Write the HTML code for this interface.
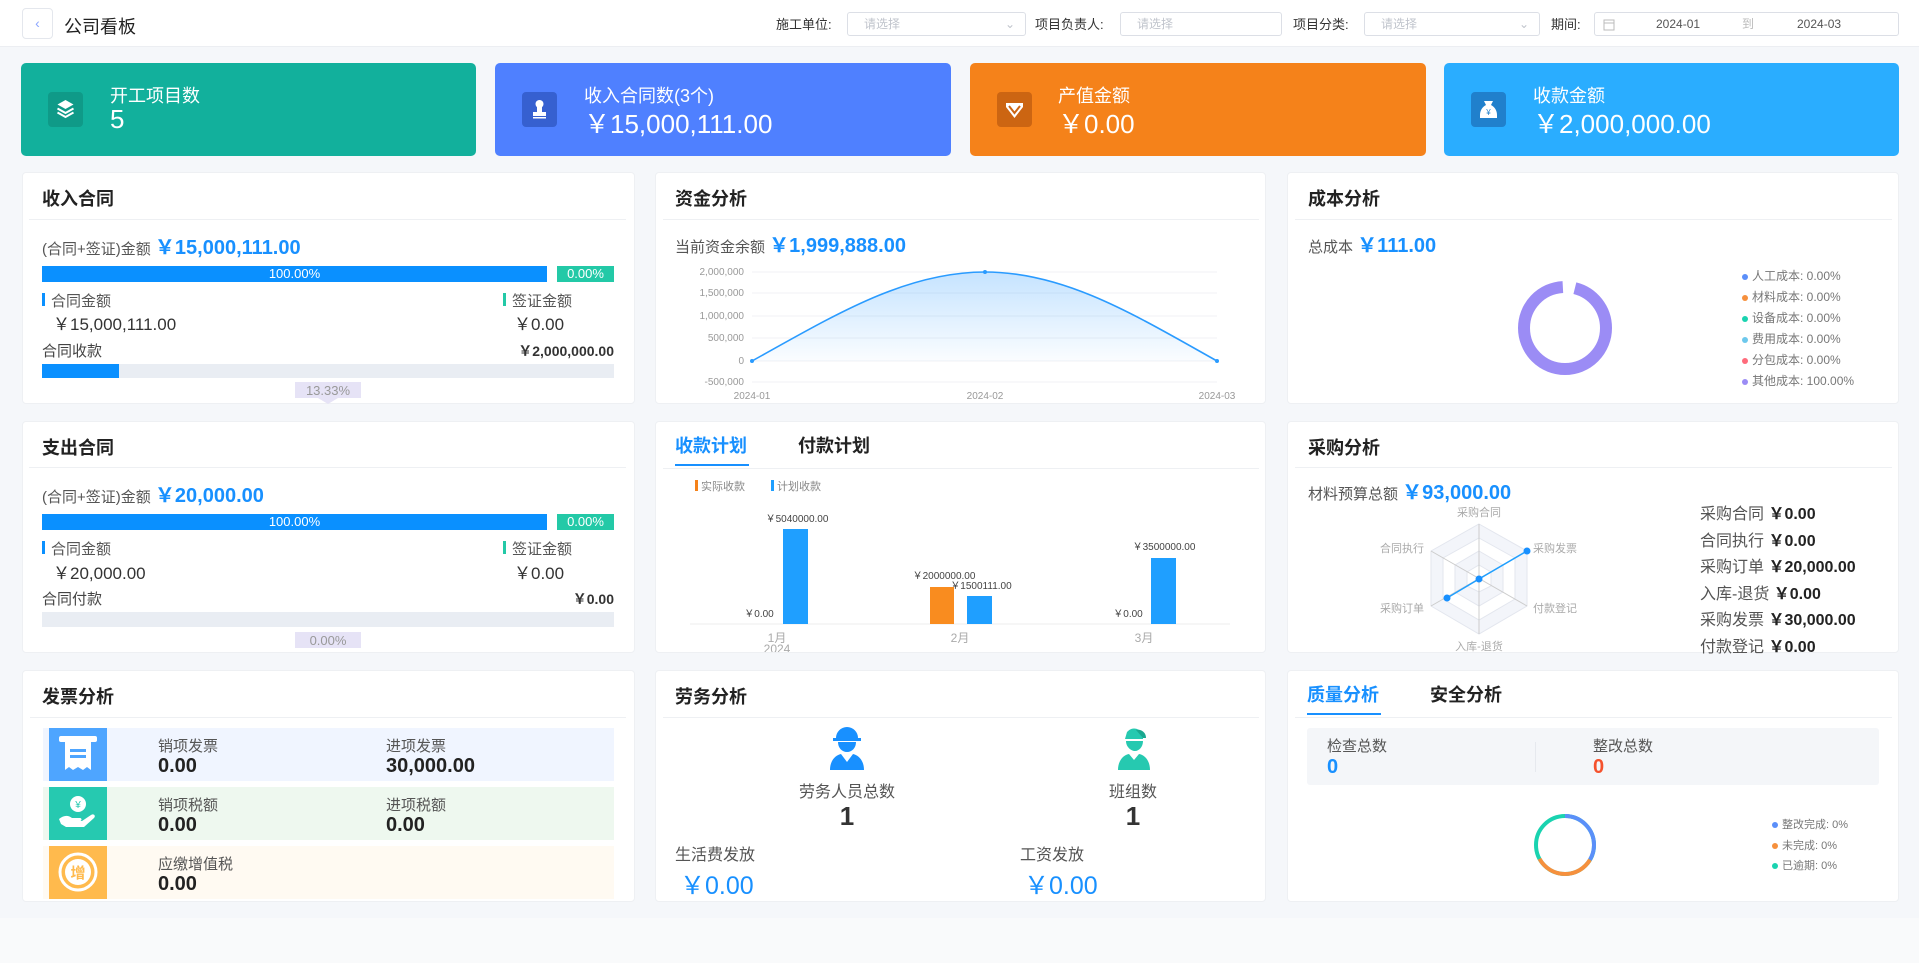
<!DOCTYPE html>
<html><head><meta charset="utf-8">
<style>
*{margin:0;padding:0;box-sizing:border-box}
body{width:1919px;height:963px;overflow:hidden;background:#f5f7fa;font-family:"Liberation Sans","Noto Sans CJK SC",sans-serif;color:#333;position:relative}
.a{position:absolute;white-space:nowrap}
.hdr{left:0;top:0;width:1919px;height:47px;background:#fff;border-bottom:1px solid #eceef2}
.inp{height:24px;top:12px;border:1px solid #dcdfe6;border-radius:3px;background:#fff;font-size:12px;color:#c0c4cc;padding-left:16px;line-height:22px}
.fl{top:14px;font-size:13px;color:#333}
.kpi{top:63px;height:93px;border-radius:5px;color:#fff}
.kpi .ic{position:absolute;left:27px;top:29px;width:35px;height:35px;border-radius:4px}
.kpi .t{position:absolute;top:19px;font-size:18px}
.kpi .v{position:absolute;top:41px;font-size:26px}
.p{background:#fff;border-radius:4px;border:1px solid #eef0f3}
.tt{font-size:18px;font-weight:bold;color:#222}
.dv{height:1px;background:#eef0f3}
.lb{font-size:15px;color:#555}
.bv{font-size:20px;font-weight:bold;color:#1890ff}
.sm{font-size:11px;color:#888}
.leg{font-size:12px;color:#777}
.dot{display:inline-block;width:6px;height:6px;border-radius:3px;margin-right:4px;vertical-align:middle}
</style></head><body>
<div class="a" style="left:0;top:918px;width:1919px;height:45px;background:#f9fafb"></div>
<div class="a hdr"></div>
<div class="a" style="left:22px;top:8px;width:31px;height:31px;border:1px solid #e4e7ed;border-radius:4px;color:#8aa4ff;font-size:14px;text-align:center;line-height:29px">&#8249;</div>
<div class="a" style="left:64px;top:13px;font-size:18px;color:#222">公司看板</div>
<div class="a fl" style="left:776px">施工单位:</div>
<div class="a inp" style="left:847px;width:179px">请选择<span style="position:absolute;right:10px;color:#c0c4cc">&#8964;</span></div>
<div class="a fl" style="left:1035px">项目负责人:</div>
<div class="a inp" style="left:1120px;width:162px">请选择</div>
<div class="a fl" style="left:1293px">项目分类:</div>
<div class="a inp" style="left:1364px;width:176px">请选择<span style="position:absolute;right:10px">&#8964;</span></div>
<div class="a fl" style="left:1551px">期间:</div>
<div class="a inp" style="left:1594px;width:305px;color:#555;padding:0">
 <svg style="position:absolute;left:8px;top:5px" width="12" height="13"><rect x="1" y="2" width="10" height="10" fill="none" stroke="#bbb"/><line x1="1" y1="5" x2="11" y2="5" stroke="#bbb"/></svg>
 <span style="position:absolute;left:61px">2024-01</span><span style="position:absolute;left:147px;color:#bbb">到</span><span style="position:absolute;left:202px">2024-03</span></div>

<!-- KPI -->
<div class="a kpi" style="left:21px;width:455px;background:#12b09c"><div class="ic" style="background:#0f9a88"><svg width="35" height="35" viewBox="0 0 35 35"><path d="M17.5 8l8 4.5-8 4.5-8-4.5z" fill="#fff"/><path d="M9.5 16.5l8 4.5 8-4.5M9.5 20.5l8 4.5 8-4.5" fill="none" stroke="#fff" stroke-width="2"/></svg></div><div class="t" style="left:89px">开工项目数</div><div class="v" style="left:89px">5</div></div>
<div class="a kpi" style="left:495px;width:456px;background:#4f80ff"><div class="ic" style="background:#3660d0"><svg width="35" height="35" viewBox="0 0 35 35"><circle cx="17.5" cy="12" r="4" fill="#fff"/><rect x="15" y="14" width="5" height="6" fill="#fff"/><rect x="11" y="20" width="13" height="4" fill="#fff"/><rect x="11" y="25" width="13" height="1.5" fill="#fff"/></svg></div><div class="t" style="left:89px">收入合同数(3个)</div><div class="v" style="left:89px">￥15,000,111.00</div></div>
<div class="a kpi" style="left:970px;width:456px;background:#f5821a"><div class="ic" style="background:#cc6512"><svg width="35" height="35" viewBox="0 0 35 35"><path d="M9 11h17v4l-8.5 11L9 15z" fill="#fff"/><path d="M12 14l5.5 7 5.5-7" fill="none" stroke="#cc6512" stroke-width="2"/></svg></div><div class="t" style="left:88px">产值金额</div><div class="v" style="left:88px">￥0.00</div></div>
<div class="a kpi" style="left:1444px;width:455px;background:#2aadff"><div class="ic" style="background:#2080cc"><svg width="35" height="35" viewBox="0 0 35 35"><path d="M13 9h9l-2 4c4 2 6 6 6 10v3H9v-3c0-4 2-8 6-10z" fill="#fff"/><text x="17.5" y="23" font-size="8" fill="#2080cc" text-anchor="middle" font-family="Liberation Sans">¥</text></svg></div><div class="t" style="left:89px">收款金额</div><div class="v" style="left:89px">￥2,000,000.00</div></div>

<!-- Row1 col1 收入合同 -->
<div class="a p" style="left:22px;top:172px;width:613px;height:232px"></div>
<div class="a tt" style="left:42px;top:185px">收入合同</div>
<div class="a dv" style="left:29px;top:219px;width:597px"></div>
<div class="a lb" style="left:42px;top:231px">(合同+签证)金额 <span class="bv">￥15,000,111.00</span></div>
<div class="a" style="left:42px;top:266px;width:505px;height:16px;background:#0a90ff;color:#fff;font-size:13px;text-align:center;line-height:16px">100.00%</div>
<div class="a" style="left:557px;top:266px;width:57px;height:16px;background:#23c9a7;color:#fff;font-size:13px;text-align:center;line-height:16px">0.00%</div>
<div class="a" style="left:42px;top:293px;width:3px;height:13px;background:#0a90ff"></div>
<div class="a lb" style="left:51px;top:290px">合同金额</div>
<div class="a" style="left:53px;top:310px;font-size:17px">￥15,000,111.00</div>
<div class="a" style="left:503px;top:293px;width:3px;height:13px;background:#23c9a7"></div>
<div class="a lb" style="left:512px;top:290px">签证金额</div>
<div class="a" style="left:514px;top:310px;font-size:17px">￥0.00</div>
<div class="a lb" style="left:42px;top:340px;color:#444">合同收款</div>
<div class="a" style="right:1305px;top:341px;font-size:14px;font-weight:bold">￥2,000,000.00</div>
<div class="a" style="left:42px;top:364px;width:572px;height:14px;background:#e9edf3"></div>
<div class="a" style="left:42px;top:364px;width:77px;height:14px;background:#0a90ff"></div>
<div class="a" style="left:295px;top:382px;width:66px;height:16px;background:#e6e3f6;color:#999;font-size:13px;text-align:center;line-height:18px">13.33%</div>
<div class="a" style="left:318px;top:398px;border-left:10px solid transparent;border-right:10px solid transparent;border-top:6px solid #e6e3f6"></div>

<!-- Row2 col1 支出合同 -->
<div class="a p" style="left:22px;top:421px;width:613px;height:232px"></div>
<div class="a tt" style="left:42px;top:434px">支出合同</div>
<div class="a dv" style="left:29px;top:467px;width:597px"></div>
<div class="a lb" style="left:42px;top:479px">(合同+签证)金额 <span class="bv">￥20,000.00</span></div>
<div class="a" style="left:42px;top:514px;width:505px;height:16px;background:#0a90ff;color:#fff;font-size:13px;text-align:center;line-height:16px">100.00%</div>
<div class="a" style="left:557px;top:514px;width:57px;height:16px;background:#23c9a7;color:#fff;font-size:13px;text-align:center;line-height:16px">0.00%</div>
<div class="a" style="left:42px;top:541px;width:3px;height:13px;background:#0a90ff"></div>
<div class="a lb" style="left:51px;top:538px">合同金额</div>
<div class="a" style="left:53px;top:559px;font-size:17px">￥20,000.00</div>
<div class="a" style="left:503px;top:541px;width:3px;height:13px;background:#23c9a7"></div>
<div class="a lb" style="left:512px;top:538px">签证金额</div>
<div class="a" style="left:514px;top:559px;font-size:17px">￥0.00</div>
<div class="a lb" style="left:42px;top:588px;color:#444">合同付款</div>
<div class="a" style="right:1305px;top:589px;font-size:14px;font-weight:bold">￥0.00</div>
<div class="a" style="left:42px;top:612px;width:572px;height:15px;background:#e9edf3"></div>
<div class="a" style="left:295px;top:632px;width:66px;height:16px;background:#e6e3f6;color:#999;font-size:13px;text-align:center;line-height:18px">0.00%</div>

<!-- 资金分析 -->
<div class="a p" style="left:655px;top:172px;width:611px;height:232px"></div>
<div class="a tt" style="left:675px;top:185px">资金分析</div>
<div class="a dv" style="left:663px;top:219px;width:596px"></div>
<div class="a lb" style="left:675px;top:229px">当前资金余额 <span class="bv">￥1,999,888.00</span></div>
<svg class="a" style="left:655px;top:260px" width="611" height="144">
<defs><linearGradient id="g" x1="0" y1="0" x2="0" y2="1"><stop offset="0" stop-color="#1890ff" stop-opacity=".25"/><stop offset="1" stop-color="#1890ff" stop-opacity=".02"/></linearGradient></defs>
<g stroke="#f0f2f5"><line x1="97" y1="12" x2="562" y2="12"/><line x1="97" y1="33" x2="562" y2="33"/><line x1="97" y1="56" x2="562" y2="56"/><line x1="97" y1="78" x2="562" y2="78"/><line x1="97" y1="101" x2="562" y2="101"/><line x1="97" y1="122" x2="562" y2="122"/></g>
<g font-size="10" fill="#999" text-anchor="end" font-family="Liberation Sans"><text x="89" y="15">2,000,000</text><text x="89" y="36">1,500,000</text><text x="89" y="59">1,000,000</text><text x="89" y="81">500,000</text><text x="89" y="104">0</text><text x="89" y="125">-500,000</text></g>
<g font-size="10" fill="#999" text-anchor="middle" font-family="Liberation Sans"><text x="97" y="139">2024-01</text><text x="330" y="139">2024-02</text><text x="562" y="139">2024-03</text></g>
<path d="M97 101C180 55 250 12 330 12S480 55 562 101Z" fill="url(#g)"/>
<path d="M97 101C180 55 250 12 330 12S480 55 562 101" fill="none" stroke="#2a9bff" stroke-width="1.6"/>
<circle cx="97" cy="101" r="2" fill="#2a9bff"/><circle cx="330" cy="12" r="2" fill="#2a9bff"/><circle cx="562" cy="101" r="2" fill="#2a9bff"/>
</svg>

<!-- 收款计划 -->
<div class="a p" style="left:655px;top:421px;width:611px;height:232px"></div>
<div class="a tt" style="left:675px;top:432px;color:#1890ff">收款计划</div>
<div class="a" style="left:675px;top:464px;width:74px;height:2px;background:#1890ff"></div>
<div class="a tt" style="left:798px;top:432px">付款计划</div>
<div class="a dv" style="left:663px;top:468px;width:596px"></div>
<div class="a sm" style="left:695px;top:478px"><span style="display:inline-block;width:3px;height:11px;background:#f5821a;vertical-align:-1px;margin-right:3px"></span>实际收款</div>
<div class="a sm" style="left:771px;top:478px"><span style="display:inline-block;width:3px;height:11px;background:#1f9fff;vertical-align:-1px;margin-right:3px"></span>计划收款</div>
<svg class="a" style="left:655px;top:500px" width="611" height="152">
<line x1="35" y1="124" x2="575" y2="124" stroke="#eee"/>
<rect x="128" y="29" width="25" height="95" fill="#1f9fff"/>
<rect x="275" y="87" width="24" height="37" fill="#f98c1f"/>
<rect x="312" y="96" width="25" height="28" fill="#1f9fff"/>
<rect x="496" y="58" width="25" height="66" fill="#1f9fff"/>
<g font-size="10" fill="#444" text-anchor="middle" font-family="Liberation Sans"><text x="142" y="22">￥5040000.00</text><text x="104" y="117">￥0.00</text><text x="289" y="79">￥2000000.00</text><text x="326" y="89">￥1500111.00</text><text x="509" y="50">￥3500000.00</text><text x="473" y="117">￥0.00</text></g>
<g font-size="12" fill="#aaa" text-anchor="middle" font-family="Liberation Sans,Noto Sans CJK SC"><text x="122" y="142">1月</text><text x="122" y="153">2024</text><text x="305" y="142">2月</text><text x="489" y="142">3月</text></g>
</svg>

<!-- 成本分析 -->
<div class="a p" style="left:1287px;top:172px;width:612px;height:232px"></div>
<div class="a tt" style="left:1308px;top:185px">成本分析</div>
<div class="a dv" style="left:1295px;top:219px;width:597px"></div>
<div class="a lb" style="left:1308px;top:229px">总成本 <span class="bv">￥111.00</span></div>
<svg class="a" style="left:1505px;top:268px" width="120" height="120"><circle cx="60" cy="60" r="41" fill="none" stroke="#9b8cf5" stroke-width="12" stroke-dasharray="245 12.6" stroke-dashoffset="-10" transform="rotate(-90 60 60)"/></svg>
<div class="a leg" style="left:1742px;top:266px;line-height:21px"><div><span class="dot" style="background:#5b8ff9"></span>人工成本: 0.00%</div><div><span class="dot" style="background:#f6903d"></span>材料成本: 0.00%</div><div><span class="dot" style="background:#1ad3b0"></span>设备成本: 0.00%</div><div><span class="dot" style="background:#6dc8ec"></span>费用成本: 0.00%</div><div><span class="dot" style="background:#ff6b7b"></span>分包成本: 0.00%</div><div><span class="dot" style="background:#9b8cf5"></span>其他成本: 100.00%</div></div>

<!-- 采购分析 -->
<div class="a p" style="left:1287px;top:421px;width:612px;height:232px"></div>
<div class="a tt" style="left:1308px;top:434px">采购分析</div>
<div class="a dv" style="left:1295px;top:467px;width:597px"></div>
<div class="a lb" style="left:1308px;top:476px">材料预算总额 <span class="bv">￥93,000.00</span></div>
<svg class="a" style="left:1380px;top:500px" width="200" height="152">
<g fill="#f3f5fa" stroke="#e3e6ee"><polygon points="99,24 147,51 147,106 99,134 51,106 51,51"/><polygon points="99,38 135,58 135,99 99,120 63,99 63,58" fill="#fff"/><polygon points="99,51 123,65 123,92 99,106 75,92 75,65"/><polygon points="99,65 111,72 111,86 99,92 87,86 87,72" fill="#fff"/></g>
<g stroke="#ccc"><line x1="99" y1="24" x2="99" y2="134"/><line x1="51" y1="51" x2="147" y2="106"/><line x1="147" y1="51" x2="51" y2="106"/></g>
<polyline points="147,51 99,79 67,98" fill="none" stroke="#1f9fff" stroke-width="1.5"/>
<circle cx="147" cy="51" r="3.5" fill="#1890ff"/><circle cx="99" cy="79" r="3.5" fill="#1890ff"/><circle cx="67" cy="98" r="3.5" fill="#1890ff"/>
<g font-size="11" fill="#aaa" font-family="Liberation Sans,Noto Sans CJK SC" text-anchor="middle"><text x="99" y="16">采购合同</text><text x="175" y="52">采购发票</text><text x="175" y="112">付款登记</text><text x="99" y="150">入库-退货</text><text x="22" y="112">采购订单</text><text x="22" y="52">合同执行</text></g>
</svg>
<div class="a" style="left:1700px;top:502px;font-size:16px;line-height:26.6px;color:#555">
<div>采购合同 <b style="color:#222">￥0.00</b></div><div>合同执行 <b style="color:#222">￥0.00</b></div><div>采购订单 <b style="color:#222">￥20,000.00</b></div><div>入库-退货 <b style="color:#222">￥0.00</b></div><div>采购发票 <b style="color:#222">￥30,000.00</b></div><div>付款登记 <b style="color:#222">￥0.00</b></div></div>

<!-- 发票分析 -->
<div class="a p" style="left:22px;top:670px;width:613px;height:232px"></div>
<div class="a tt" style="left:42px;top:683px">发票分析</div>
<div class="a dv" style="left:30px;top:717px;width:596px"></div>
<div class="a" style="left:43px;top:728px;width:571px;height:53px;background:#f0f5ff"></div>
<div class="a" style="left:49px;top:728px;width:58px;height:53px;background:#4ea5ff"><svg width="58" height="53"><rect x="10" y="8" width="38" height="6" rx="2" fill="#fff"/><path d="M16 12h26v30l-4-3-4 3-5-3-5 3-4-3-4 3z" fill="#fff"/><rect x="21" y="21" width="16" height="3" fill="#4ea5ff"/><rect x="21" y="27" width="16" height="3" fill="#4ea5ff"/></svg></div>
<div class="a" style="left:43px;top:787px;width:571px;height:53px;background:#eef8ef"></div>
<div class="a" style="left:49px;top:787px;width:58px;height:53px;background:#26c9b0"><svg width="58" height="53"><circle cx="29" cy="17" r="8" fill="#fff"/><text x="29" y="21" font-size="10" text-anchor="middle" fill="#26c9b0" font-family="Liberation Sans">¥</text><path d="M10 32c5-4 9-4 13-1h8c2 0 2 3 0 3h-7 9l9-6c3-2 5 1 3 3l-10 9H17l-5-3z" fill="#fff"/></svg></div>
<div class="a" style="left:43px;top:846px;width:571px;height:53px;background:#fffaf2"></div>
<div class="a" style="left:49px;top:846px;width:58px;height:53px;background:#ffba4d"><svg width="58" height="53"><circle cx="29" cy="26" r="18" fill="none" stroke="#fff" stroke-width="3"/><circle cx="29" cy="26" r="13" fill="#fff"/><text x="29" y="32" font-size="15" text-anchor="middle" fill="#ffba4d" font-weight="bold" font-family="Noto Sans CJK SC">增</text></svg></div>
<div class="a lb" style="left:158px;top:735px">销项发票</div><div class="a" style="left:158px;top:755px;font-size:20px;font-weight:bold;color:#222">0.00</div>
<div class="a lb" style="left:386px;top:735px">进项发票</div><div class="a" style="left:386px;top:755px;font-size:20px;font-weight:bold;color:#222">30,000.00</div>
<div class="a lb" style="left:158px;top:794px">销项税额</div><div class="a" style="left:158px;top:814px;font-size:20px;font-weight:bold;color:#222">0.00</div>
<div class="a lb" style="left:386px;top:794px">进项税额</div><div class="a" style="left:386px;top:814px;font-size:20px;font-weight:bold;color:#222">0.00</div>
<div class="a lb" style="left:158px;top:853px">应缴增值税</div><div class="a" style="left:158px;top:873px;font-size:20px;font-weight:bold;color:#222">0.00</div>

<!-- 劳务分析 -->
<div class="a p" style="left:655px;top:670px;width:611px;height:232px"></div>
<div class="a tt" style="left:675px;top:683px">劳务分析</div>
<div class="a dv" style="left:663px;top:717px;width:596px"></div>
<svg class="a" style="left:827px;top:727px" width="40" height="44"><path d="M9 11a11 11 0 0 1 22 0h3v3H6v-3z" fill="#1890ff"/><path d="M11 15h18c0 6-4 10-9 10s-9-4-9-10z" fill="#1890ff"/><path d="M3 43c0-10 6-15 11-16l6 8 6-8c5 1 11 6 11 16z" fill="#1890ff"/></svg>
<div class="a" style="left:787px;top:778px;width:120px;text-align:center;font-size:16px;color:#555">劳务人员总数</div>
<div class="a" style="left:787px;top:801px;width:120px;text-align:center;font-size:26px;font-weight:bold;color:#333">1</div>
<svg class="a" style="left:1113px;top:727px" width="40" height="44"><path d="M14 5a9 9 0 0 1 16 4v3H12z" fill="#26c9b0"/><path d="M23 3a8 8 0 0 1 10 8l-3 0z" fill="#1aa890"/><path d="M13 14h17c0 6-4 10-8 10s-9-4-9-10z" fill="#26c9b0"/><path d="M5 43c0-9 5-15 11-16l5 6 5-6c6 1 11 7 11 16z" fill="#26c9b0"/></svg>
<div class="a" style="left:1073px;top:778px;width:120px;text-align:center;font-size:16px;color:#555">班组数</div>
<div class="a" style="left:1073px;top:801px;width:120px;text-align:center;font-size:26px;font-weight:bold;color:#333">1</div>
<div class="a" style="left:675px;top:841px;font-size:16px;color:#555">生活费发放</div>
<div class="a" style="left:680px;top:866px;font-size:25px;color:#1890ff">￥0.00</div>
<div class="a" style="left:1020px;top:841px;font-size:16px;color:#555">工资发放</div>
<div class="a" style="left:1024px;top:866px;font-size:25px;color:#1890ff">￥0.00</div>

<!-- 质量分析 -->
<div class="a p" style="left:1287px;top:670px;width:612px;height:232px"></div>
<div class="a tt" style="left:1307px;top:681px;color:#1890ff">质量分析</div>
<div class="a" style="left:1307px;top:713px;width:74px;height:2px;background:#1890ff"></div>
<div class="a tt" style="left:1430px;top:681px">安全分析</div>
<div class="a dv" style="left:1295px;top:717px;width:597px"></div>
<div class="a" style="left:1307px;top:728px;width:572px;height:57px;background:#f4f6f9;border-radius:3px"></div>
<div class="a" style="left:1535px;top:742px;width:1px;height:30px;background:#e6e9ee"></div>
<div class="a lb" style="left:1327px;top:735px">检查总数</div><div class="a" style="left:1327px;top:756px;font-size:20px;font-weight:bold;color:#1890ff">0</div>
<div class="a lb" style="left:1593px;top:735px">整改总数</div><div class="a" style="left:1593px;top:756px;font-size:20px;font-weight:bold;color:#f5522d">0</div>
<svg class="a" style="left:1530px;top:810px" width="70" height="70"><g fill="none" stroke-width="4" transform="rotate(-90 35 35)"><circle cx="35" cy="35" r="29" stroke="#1ad3b0"/><circle cx="35" cy="35" r="29" stroke="#5b8ff9" stroke-dasharray="61 200"/><circle cx="35" cy="35" r="29" stroke="#f6903d" stroke-dasharray="0 61 61 200"/></g></svg>
<div class="a leg" style="left:1772px;top:815px;line-height:20.5px;font-size:11px"><div><span class="dot" style="background:#5b8ff9"></span>整改完成: 0%</div><div><span class="dot" style="background:#f6903d"></span>未完成: 0%</div><div><span class="dot" style="background:#1ad3b0"></span>已逾期: 0%</div></div>
</body></html>
